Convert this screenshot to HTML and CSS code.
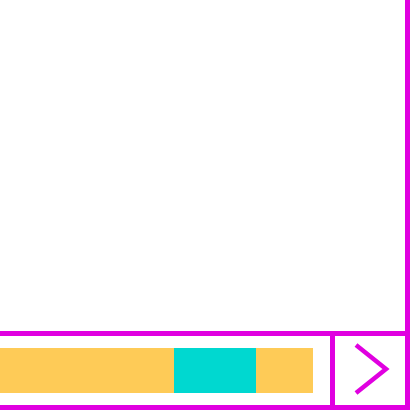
FILE: index.html
```html
<!DOCTYPE html>
<html>
<head>
<meta charset="utf-8">
<link rel="stylesheet" href="styles.css">
</head>
<body>
<div class="frame">
  <div class="canvas"></div>
  <div class="footer">
    <div class="track">
      <div class="bar">
        <div class="seg seg-before"></div>
        <div class="seg seg-thumb"></div>
        <div class="seg seg-after"></div>
      </div>
    </div>
    <div class="next">
      <svg width="40" height="56" viewBox="0 0 40 56" aria-hidden="true">
        <polyline points="6,2 36,26 6,50" fill="none" stroke="#e000e0" stroke-width="4.5" stroke-linecap="butt" stroke-linejoin="miter"/>
      </svg>
    </div>
  </div>
</div>
</body>
</html>
```
FILE: styles.css
```css
html, body {
  margin: 0;
  padding: 0;
  background: #ffffff;
}
.frame {
  width: 410px;
  height: 410px;
  box-sizing: border-box;
  border-right: 5px solid #e000e0;
  display: flex;
  flex-direction: column;
}
.canvas {
  flex: 1;
}
.footer {
  height: 79px;
  box-sizing: border-box;
  border-top: 5px solid #e000e0;
  border-bottom: 5px solid #e000e0;
  display: flex;
}
.track {
  flex: 1;
  display: flex;
  align-items: center;
  padding-right: 17px;
}
.bar {
  flex: 1;
  height: 45px;
  display: flex;
}
.seg-before {
  width: 174px;
  background: #fecb57;
}
.seg-thumb {
  width: 82px;
  background: #00d8d0;
}
.seg-after {
  flex: 1;
  background: #fecb57;
}
.next {
  width: 75px;
  box-sizing: border-box;
  border-left: 5px solid #e000e0;
  display: flex;
  align-items: center;
  justify-content: center;
}
.next svg {
  display: block;
}
```
